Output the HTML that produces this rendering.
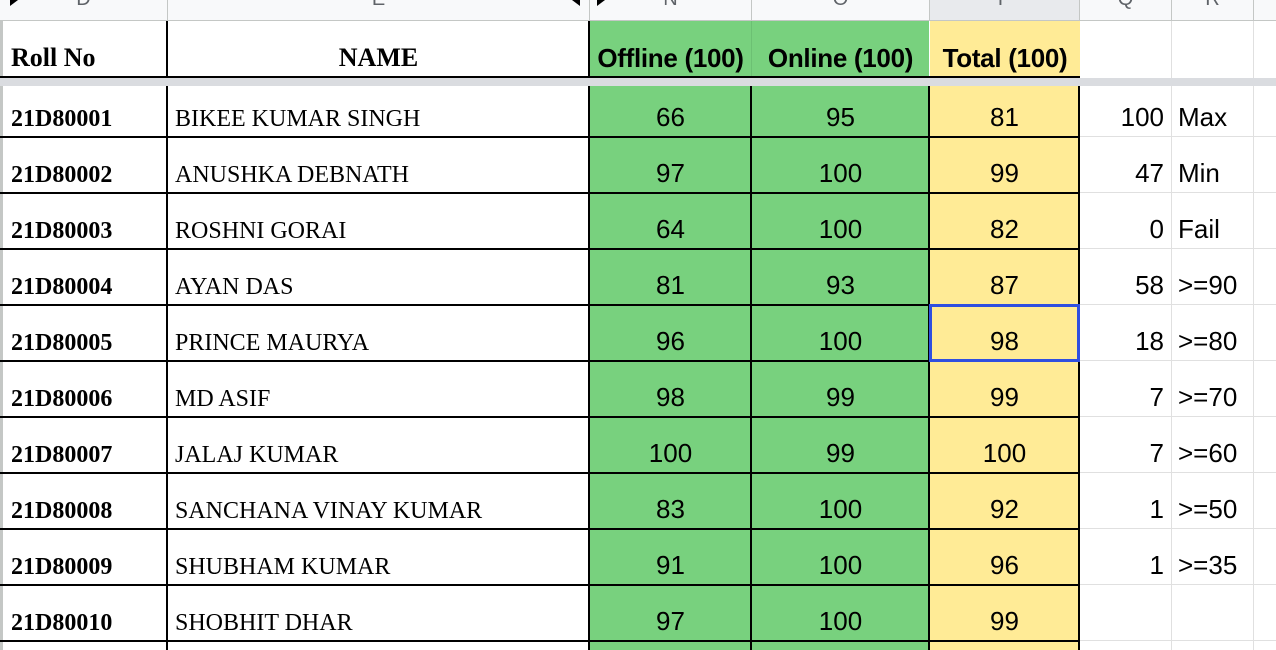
<!DOCTYPE html>
<html><head><style>
body{margin:0;width:1276px;height:650px;overflow:hidden;background:#fff;position:relative;font-family:"Liberation Sans",sans-serif}
div{position:absolute;box-sizing:border-box}
.ch{top:0;height:21px;background:#f8f9fa;border-bottom:1px solid #c4c7c5;border-right:1px solid #c4c7c5;color:#5f6368;font-size:20px;text-align:center;line-height:1;overflow:hidden}
.ch span{position:relative;top:-11px}
.t{white-space:nowrap;line-height:1}
.serif{font-family:"Liberation Serif",serif}
</style></head><body>
<div class="ch" style="left:0;width:168px"><span>D</span></div>
<div class="ch" style="left:168px;width:422px"><span>E</span></div>
<div class="ch" style="left:590px;width:162px"><span>N</span></div>
<div class="ch" style="left:752px;width:178px"><span>O</span></div>
<div class="ch" style="left:930px;width:150px;background:#e8eaed"><span>P</span></div>
<div class="ch" style="left:1080px;width:92px"><span>Q</span></div>
<div class="ch" style="left:1172px;width:82px"><span>R</span></div>
<div class="ch" style="left:1254px;width:30px"></div>
<svg style="position:absolute;left:0;top:0" width="1276" height="10"><polygon points="10,0 18,0 10,6" fill="#000"/><polygon points="580,0 572,0 580,6" fill="#000"/><polygon points="597,0 605,0 597,6" fill="#000"/></svg>
<div style="left:0;top:21px;width:3px;height:629px;background:#c4c7c5"></div>
<div style="left:590px;top:21px;width:339px;height:56px;background:#78d17e"></div>
<div style="left:930px;top:21px;width:150px;height:56px;background:#ffeb96"></div>
<div style="left:590px;top:86px;width:339px;height:564px;background:#78d17e"></div>
<div style="left:930px;top:86px;width:150px;height:564px;background:#ffeb96"></div>
<div style="left:0;top:78px;width:1276px;height:8px;background:#dadce0"></div>
<div style="left:0;top:76px;width:1080px;height:2px;background:#000"></div>
<div style="left:166px;top:21px;width:2px;height:57px;background:#000"></div>
<div style="left:588px;top:21px;width:2px;height:57px;background:#000"></div>
<div style="left:751px;top:21px;width:1px;height:55px;background:#6cc073"></div>
<div style="left:1171px;top:21px;width:1px;height:57px;background:#e0e0e0"></div>
<div style="left:1253px;top:21px;width:1px;height:57px;background:#e0e0e0"></div>
<div class="t serif" style="left:11px;top:45px;font-size:26px;font-weight:bold">Roll No</div>
<div class="t serif" style="left:168px;width:421px;top:45px;font-size:26px;font-weight:bold;text-align:center">NAME</div>
<div class="t" style="left:590px;width:161px;top:45px;font-size:26px;font-weight:bold;text-align:center;letter-spacing:-0.3px">Offline (100)</div>
<div class="t" style="left:752px;width:177px;top:45px;font-size:26px;font-weight:bold;text-align:center;letter-spacing:-0.3px">Online (100)</div>
<div class="t" style="left:930px;width:150px;top:45px;font-size:26px;font-weight:bold;text-align:center;letter-spacing:-0.3px">Total (100)</div>
<div style="left:166px;top:86px;width:2px;height:564px;background:#000"></div>
<div style="left:588px;top:86px;width:2px;height:564px;background:#000"></div>
<div style="left:750px;top:86px;width:2px;height:564px;background:#000"></div>
<div style="left:928px;top:86px;width:2px;height:564px;background:#000"></div>
<div style="left:1078px;top:86px;width:2px;height:564px;background:#000"></div>
<div style="left:1171px;top:86px;width:1px;height:564px;background:#e0e0e0"></div>
<div style="left:1253px;top:86px;width:1px;height:564px;background:#e0e0e0"></div>
<div id="rows"></div>
<script>
var d=[["21D80001","BIKEE KUMAR SINGH",66,95,81,"100","Max"],["21D80002","ANUSHKA DEBNATH",97,100,99,"47","Min"],["21D80003","ROSHNI GORAI",64,100,82,"0","Fail"],["21D80004","AYAN DAS",81,93,87,"58",">=90"],["21D80005","PRINCE MAURYA",96,100,98,"18",">=80"],["21D80006","MD ASIF",98,99,99,"7",">=70"],["21D80007","JALAJ KUMAR",100,99,100,"7",">=60"],["21D80008","SANCHANA VINAY KUMAR",83,100,92,"1",">=50"],["21D80009","SHUBHAM KUMAR",91,100,96,"1",">=35"],["21D80010","SHOBHIT DHAR",97,100,99,"",""]];
var h="";
d.forEach(function(r,i){var L=136+56*i,c=L-18,t=c-12;
h+='<div style="left:0;top:'+L+'px;width:1080px;height:2px;background:#000"></div>';
h+='<div style="left:1080px;top:'+L+'px;width:196px;height:1px;background:#e0e0e0"></div>';
h+='<div class="t serif" style="left:11px;top:'+(t+1)+'px;font-size:24px;font-weight:bold">'+r[0]+'</div>';
h+='<div class="t serif" style="left:175px;top:'+(t+1)+'px;font-size:24px">'+r[1]+'</div>';
h+='<div class="t" style="left:590px;width:161px;text-align:center;top:'+(t-2)+'px;font-size:26px">'+r[2]+'</div>';
h+='<div class="t" style="left:752px;width:177px;text-align:center;top:'+(t-2)+'px;font-size:26px">'+r[3]+'</div>';
h+='<div class="t" style="left:930px;width:149px;text-align:center;top:'+(t-2)+'px;font-size:26px">'+r[4]+'</div>';
h+='<div class="t" style="left:1080px;width:84px;text-align:right;top:'+(t-2)+'px;font-size:26px">'+r[5]+'</div>';
h+='<div class="t" style="left:1178px;top:'+(t-2)+'px;font-size:26px">'+r[6]+'</div>';
});
h+='<div style="left:929px;top:304px;width:151px;height:58px;border:3px solid #2f4fe0"></div>';
document.getElementById("rows").innerHTML=h;
</script>
</body></html>
